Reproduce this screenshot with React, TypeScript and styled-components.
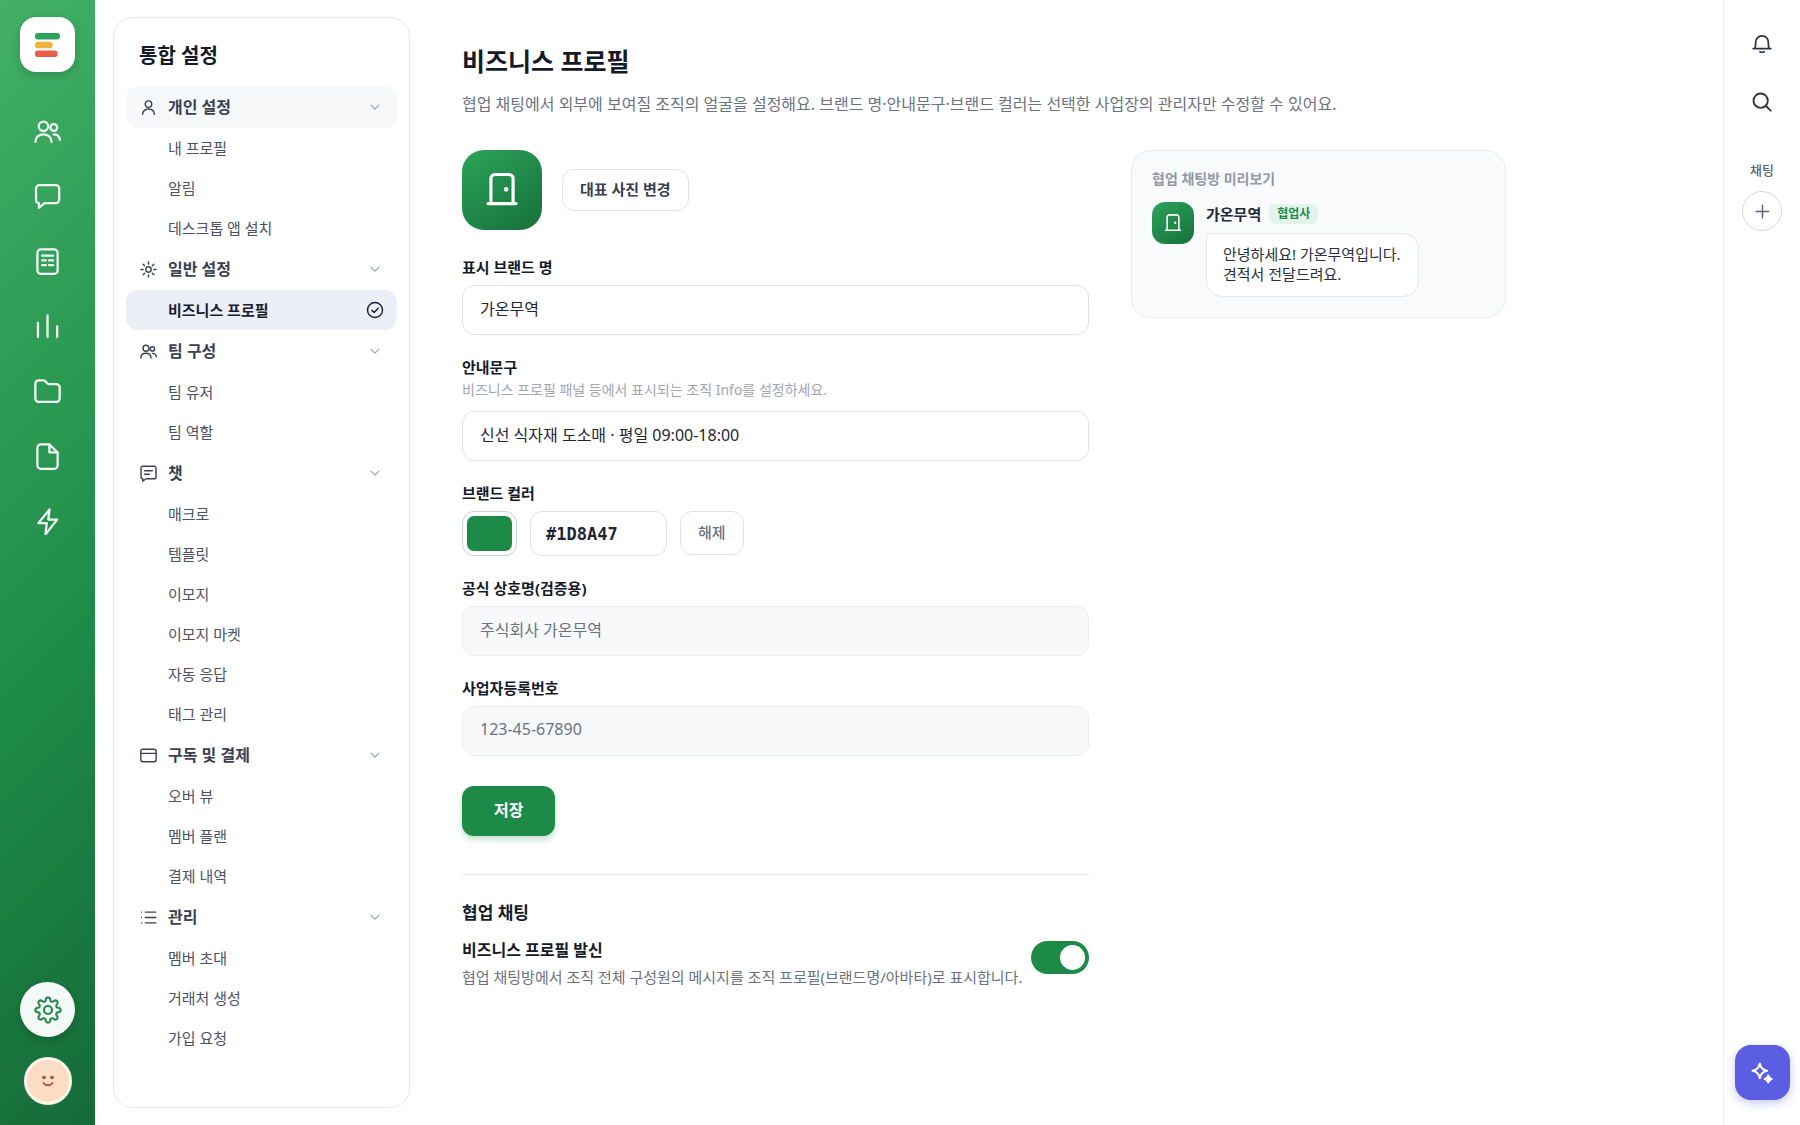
import React, { useState } from "react";
import styled, { createGlobalStyle, css } from "styled-components";

const sans = '"Noto Sans", "Noto Sans CJK KR", sans-serif';

const GlobalStyle = createGlobalStyle`
  *, *::before, *::after { box-sizing: border-box; }
  body { margin: 0; background: #fff; color: #151a28; font-family: ${sans}; font-size: 15px; }
  button, input { font-family: inherit; margin: 0; }
  button { cursor: pointer; }
  h1, h2, p, ul { margin: 0; padding: 0; }
  ul { list-style: none; }
`;

/* ---------- icons ---------- */

const Svg = styled.svg<{ $size: number; $stroke?: number }>`
  width: ${p => p.$size}px;
  height: ${p => p.$size}px;
  flex: none;
  display: block;
  fill: none;
  stroke: currentColor;
  stroke-width: ${p => p.$stroke ?? 2};
  stroke-linecap: round;
  stroke-linejoin: round;
`;

type IconProps = { size: number; stroke?: number };
const icon = (body: React.ReactNode) => ({ size, stroke }: IconProps) => (
  <Svg $size={size} $stroke={stroke} viewBox="0 0 24 24" aria-hidden="true">{body}</Svg>
);

const UsersIcon = icon(<>
  <circle cx="8.4" cy="7.4" r="4.2" />
  <path d="M1.2 21.3c.2-4.2 3.3-6.8 7.2-6.8s7 2.6 7.2 6.8" />
  <circle cx="17.6" cy="8.4" r="3" />
  <path d="M17.4 14.6c3 0 5.2 1.8 5.7 4.8" />
</>);
const ChatIcon = icon(<path d="M4.8 1.8h14.6a3 3 0 0 1 3 3v10.1a3 3 0 0 1-3 3H9.4L4.4 22v-4.1a2.7 2.7 0 0 1-2.6-2.7V4.8a3 3 0 0 1 3-3Z" />);
const ReceiptIcon = icon(<>
  <rect x="3" y="1.3" width="18" height="21.6" rx="3" />
  <path d="M7.2 6.8h9.8M7.2 11.1h3.4M13.4 11.1H17M7.2 15.3h3.4M13.4 15.3H17" />
</>);
const BarsIcon = icon(<path d="M3.5 8.8v12.6M12 2.2v19.2M20.6 11.8v9.6" />);
const FolderIcon = icon(<path d="M4.2 2.1h4c.9 0 1.6.3 2.2 1l1.1 1.4c.5.6 1.1.9 1.9.9h6.4a3 3 0 0 1 3 3v9.8a3 3 0 0 1-3 3H4.2a3 3 0 0 1-3-3V5.1a3 3 0 0 1 3-3Z" />);
const FileIcon = icon(<>
  <path d="M6 1.3h7.7L21 8.4v11.5a3 3 0 0 1-3 3H6a3 3 0 0 1-3-3V4.3a3 3 0 0 1 3-3Z" />
  <path d="M13.7 1.5v6.9h7.1" />
</>);
const BoltIcon = icon(<path d="M13.8 1.3 4 13.4h7.3l-1.1 10L20.6 10.3h-7.9l1.1-9Z" />);
const PersonIcon = icon(<>
  <circle cx="12" cy="7.2" r="4.6" />
  <path d="M3.6 21.6c.5-5 3.9-7.6 8.4-7.6s7.9 2.6 8.4 7.6" />
</>);
const SunIcon = icon(<>
  <circle cx="12" cy="12" r="3.8" />
  <path d="M12 1.4v3M12 19.6v3M1.4 12h3M19.6 12h3M4.5 4.5l2.1 2.1M17.4 17.4l2.1 2.1M4.5 19.5l2.1-2.1M17.4 6.6l2.1-2.1" />
</>);
const MessageIcon = icon(<>
  <path d="M4 1.8h16a2.6 2.6 0 0 1 2.6 2.6v12.4a2.6 2.6 0 0 1-2.6 2.6H8.6l-4.8 3.4v-3.5a2.4 2.4 0 0 1-2.4-2.4V4.4A2.6 2.6 0 0 1 4 1.8Z" />
  <path d="M6.6 8.2h10.8M6.6 13h6.6" />
</>);
const CardIcon = icon(<>
  <rect x="1.2" y="3.2" width="21.6" height="17.6" rx="3" />
  <path d="M1.2 9h21.6" />
</>);
const ListIcon = icon(<path d="M7.6 4.4h14.8M7.6 12h14.8M7.6 19.6h14.8M2.2 4.4h.1M2.2 12h.1M2.2 19.6h.1" />);
const ChevronIcon = icon(<path d="m2.500 7.500 9.500 9.500 9.500-9.500" />);
const CheckCircleIcon = icon(<>
  <circle cx="12" cy="12" r="10" />
  <path d="m7.8 12.200 3 3 5.400-5.600" />
</>);
const DoorIcon = icon(<>
  <path d="M5 20.4V4.8a2.6 2.6 0 0 1 2.6-2.6h8.8A2.6 2.6 0 0 1 19 4.8v15.6" />
  <path d="M3.2 20.6h17.6" />
  <circle cx="14.6" cy="11.6" r=".5" fill="currentColor" />
</>);
const BellIcon = icon(<>
  <path d="M1.4 18.6h21.2M3.6 18.4c.8-2 .8-4.8.8-7.4a7.6 7.6 0 0 1 15.2 0c0 2.600 0 5.400.8 7.400" />
  <path d="M9.6 22.4c1.3 1.3 3.5 1.3 4.8 0" />
</>);
const SearchIcon = icon(<>
  <circle cx="10.4" cy="10.4" r="8.6" />
  <path d="m16.800 16.800 5.600 5.600" />
</>);
const PlusIcon = icon(<path d="M12 2v20M2 12h20" />);
const SparkleIcon = icon(<>
  <path d="M9.6 1.6c.9 5 3 7.1 8 8-5 .9-7.1 3-8 8-.9-5-3-7.1-8-8 5-.9 7.1-3 8-8Z" />
  <path d="M18.8 14.6c.5 2.6 1.3 3.4 3.9 3.9-2.600.5-3.400 1.300-3.900 3.900-.5-2.600-1.300-3.400-3.900-3.900 2.600-.5 3.400-1.300 3.900-3.900Z" fill="currentColor" />
</>);

const gearOutline = Array.from({ length: 240 }, (_, i) => {
  const t = (i / 240) * Math.PI * 2;
  const r = 9.3 + 1.6 * Math.tanh(1.6 * Math.cos(8 * t));
  return `${i ? "L" : "M"}${(12 + r * Math.sin(t)).toFixed(2)} ${(12 - r * Math.cos(t)).toFixed(2)}`;
}).join("") + "Z";
const GearIcon = icon(<><path d={gearOutline} /><circle cx="12" cy="12" r="3.4" /></>);

/* ---------- shell ---------- */

const Shell = styled.div`
  display: grid;
  grid-template-columns: 95px auto minmax(0, 1fr) 77px;
  min-height: 100vh;
`;

const Rail = styled.nav`
  display: flex;
  flex-direction: column;
  align-items: center;
  padding: 17px 0 20px;
  background: linear-gradient(135deg, #43b066 0%, #1d8a47 60%, #166b38 100%);
  color: #f2fff6;
`;

const Logo = styled.a`
  display: grid;
  place-items: center;
  width: 55px;
  height: 55px;
  border-radius: 16px;
  background: #fff;
  box-shadow: 0 3px 8px rgba(0, 40, 15, 0.22);
`;

const RailList = styled.ul`
  display: flex;
  flex-direction: column;
  gap: 15px;
  margin-top: 34px;
`;

const RailButton = styled.button`
  display: grid;
  place-items: center;
  width: 50px;
  height: 50px;
  padding: 0;
  border: 0;
  border-radius: 14px;
  background: none;
  color: inherit;
`;

const RailFoot = styled.div`
  display: flex;
  flex-direction: column;
  align-items: center;
  gap: 20px;
  margin-top: auto;
`;

const RoundButton = styled.button`
  display: grid;
  place-items: center;
  width: 55px;
  height: 55px;
  padding: 0;
  border: 0;
  border-radius: 50%;
  background: #f4f8f6;
  color: #1d8a47;
  box-shadow: 0 3px 8px rgba(0, 40, 15, 0.25);
`;

const UserButton = styled.button`
  display: grid;
  place-items: center;
  width: 48px;
  height: 48px;
  padding: 0;
  border: 3px solid #fff6ea;
  border-radius: 50%;
  background: #fddcc4;
  color: #a8502b;
`;

/* ---------- settings menu ---------- */

const Menu = styled.aside`
  width: 297px;
  margin: 17px 0 17px 18px;
  padding: 22px 12px;
  border: 1px solid #e7e9ec;
  border-radius: 20px;
`;

const MenuTitle = styled.h2`
  padding: 0 13px 14px;
  font-size: 20px;
  line-height: 32px;
  font-weight: 700;
`;

const GroupButton = styled.button<{ $hover?: boolean }>`
  display: flex;
  align-items: center;
  gap: 11px;
  width: 100%;
  height: 42px;
  padding: 0 17px 0 14px;
  border: 0;
  border-radius: 12px;
  background: ${p => (p.$hover ? "#f6f8fa" : "none")};
  color: #3a4152;
  font-size: 16px;
  line-height: 22px;
  font-weight: 700;
  text-align: left;
`;

const GroupName = styled.span`
  flex: 1;
`;

const Chevron = styled.span`
  color: #9aa0ac;
`;

const ItemLink = styled.a<{ $active?: boolean }>`
  display: flex;
  align-items: center;
  justify-content: space-between;
  height: 40px;
  padding: 0 13px 0 42px;
  border-radius: 12px;
  color: #4b5262;
  font-size: 15px;
  line-height: 22px;
  text-decoration: none;
  ${p => p.$active && css`
    background: #eceff7;
    color: #1a2030;
    font-weight: 700;
  `}
`;

/* ---------- main ---------- */

const Main = styled.main`
  padding: 43px 40px 40px 52px;
`;

const Title = styled.h1`
  font-size: 25px;
  line-height: 36px;
  font-weight: 700;
`;

const Lead = styled.p`
  margin-top: 13px;
  color: #6b7280;
  font-size: 16px;
  line-height: 24px;
`;

const Columns = styled.div`
  display: grid;
  grid-template-columns: minmax(0, 627px) minmax(0, 375px);
  align-items: start;
  gap: 42px;
  margin-top: 34px;
`;

const Form = styled.form`
  display: flex;
  flex-direction: column;
`;

const PhotoRow = styled.div`
  display: flex;
  align-items: center;
  gap: 20px;
  margin-bottom: 5px;
`;

const BrandAvatar = styled.div<{ $size: number; $radius: number }>`
  display: grid;
  place-items: center;
  flex: none;
  width: ${p => p.$size}px;
  height: ${p => p.$size}px;
  border-radius: ${p => p.$radius}px;
  background: linear-gradient(145deg, #2ca35a, #16703a);
  color: #fff;
`;

const OutlineButton = styled.button<{ $quiet?: boolean }>`
  height: ${p => (p.$quiet ? 44 : 42)}px;
  padding: 0 17px 2px;
  border: 1px solid #e1e4e8;
  border-radius: 12px;
  background: #fff;
  color: ${p => (p.$quiet ? "#6b7280" : "#374051")};
  font-size: 15px;
  line-height: 22px;
  font-weight: ${p => (p.$quiet ? 500 : 600)};
`;

const Field = styled.div`
  display: flex;
  flex-direction: column;
  margin-top: 21px;
`;

const Label = styled.label`
  font-size: 15px;
  line-height: 22px;
  font-weight: 700;
`;

const Hint = styled.p`
  padding-bottom: 2px;
  color: #a0a6b1;
  font-size: 14px;
  line-height: 24px;
`;

const TextInput = styled.input`
  width: 100%;
  height: 50px;
  margin-top: 7px;
  padding: 0 17px 4px;
  border: 1px solid #dfe2e6;
  border-radius: 12px;
  background: #fff;
  color: #1f2533;
  font-size: 16px;
  &:read-only {
    border-color: #eceef1;
    background: #f7f9fb;
    color: #6b7280;
  }
`;

const ColorRow = styled.div`
  display: flex;
  gap: 13px;
  margin-top: 7px;
`;

const ColorInput = styled.input`
  width: 55px;
  height: 45px;
  padding: 4px;
  border: 1px solid #c6d3d2;
  border-radius: 12px;
  background: #fff;
  appearance: none;
  &::-webkit-color-swatch-wrapper { padding: 0; }
  &::-webkit-color-swatch { border: 0; border-radius: 7px; }
`;

const HexInput = styled.input`
  width: 137px;
  height: 45px;
  padding: 0 15px;
  border: 1px solid #dfe2e6;
  border-radius: 12px;
  background: #fff;
  color: #1f2533;
  && { font-family: "DejaVu Sans Mono", monospace; }
  font-size: 17px;
  font-weight: 700;
`;

const SaveButton = styled.button`
  align-self: flex-start;
  height: 50px;
  margin-top: 30px;
  padding: 0 32px 2px;
  border: 0;
  border-radius: 12px;
  background: #1d8a47;
  color: #fff;
  font-size: 16px;
  line-height: 24px;
  font-weight: 700;
  box-shadow: 0 3px 6px rgba(29, 138, 71, 0.3);
`;

const Section = styled.section`
  margin-top: 38px;
  padding-top: 24px;
  border-top: 1px solid #e7e9ec;
`;

const SectionTitle = styled.h2`
  font-size: 17px;
  line-height: 28px;
  font-weight: 700;
`;

const ToggleRow = styled.div`
  display: flex;
  align-items: flex-start;
  justify-content: space-between;
  gap: 4px;
  margin-top: 10px;
`;

const ToggleLabel = styled.label`
  display: block;
  font-size: 16px;
  line-height: 26px;
  font-weight: 700;
`;

const ToggleText = styled.p`
  margin-top: 3px;
  color: #6b7280;
  font-size: 15px;
  line-height: 22px;
`;

const Switch = styled.input`
  flex: none;
  width: 58px;
  height: 33px;
  padding: 4px;
  border-radius: 17px;
  background: #cfd4da;
  appearance: none;
  cursor: pointer;
  && { margin-top: 4px; }
  &::before {
    content: "";
    display: block;
    width: 25px;
    height: 25px;
    border-radius: 50%;
    background: #fff;
  }
  &:checked { background: #1d8a47; }
  &:checked::before { margin-left: auto; }
`;

/* ---------- chat preview ---------- */

const Preview = styled.aside`
  padding: 17px 20px 20px;
  border: 1px solid #e8eaee;
  border-radius: 20px;
  background: #f9fafc;
`;

const PreviewTitle = styled.h2`
  color: #9298a5;
  font-size: 14px;
  line-height: 22px;
  font-weight: 600;
`;

const Message = styled.div`
  display: flex;
  align-items: flex-start;
  gap: 12px;
  margin-top: 12px;
`;

const Sender = styled.div`
  display: flex;
  align-items: center;
  gap: 8px;
  font-size: 15px;
  line-height: 24px;
  font-weight: 700;
  color: #232936;
`;

const Tag = styled.span`
  padding: 0 8px;
  border-radius: 6px;
  background: #e5f4ea;
  color: #1d8a47;
  font-size: 12px;
  line-height: 20px;
`;

const Bubble = styled.p`
  width: fit-content;
  margin-top: 7px;
  padding: 10px 17px 12px 16px;
  border: 1px solid #e4e7eb;
  border-radius: 4px 16px 16px 16px;
  background: #fff;
  color: #2a303d;
  font-size: 15px;
  line-height: 20px;
`;

/* ---------- right dock ---------- */

const Dock = styled.aside`
  display: flex;
  flex-direction: column;
  align-items: center;
  padding: 23px 0 25px;
  border-left: 1px solid #eceef1;
  color: #2d3340;
`;

const DockButton = styled.button`
  display: grid;
  place-items: center;
  width: 40px;
  height: 40px;
  margin-bottom: 19px;
  padding: 0;
  border: 0;
  background: none;
  color: inherit;
`;

const DockLabel = styled.span`
  margin-top: 20px;
  color: #5b6374;
  font-size: 13px;
  line-height: 18px;
  font-weight: 500;
`;

const AddButton = styled.button`
  display: grid;
  place-items: center;
  width: 40px;
  height: 40px;
  margin-top: 12px;
  padding: 0;
  border: 1px solid #d5d8dd;
  border-radius: 50%;
  background: #fff;
  color: #5b6374;
`;

const AssistantButton = styled.button`
  display: grid;
  place-items: center;
  width: 55px;
  height: 55px;
  margin-top: auto;
  padding: 0;
  border: 0;
  border-radius: 16px;
  background: #5b5ee1;
  color: #fff;
  box-shadow: 0 3px 10px rgba(91, 94, 225, 0.35);
`;

/* ---------- data ---------- */

const railItems = [
  { name: "멤버", Icon: UsersIcon },
  { name: "채팅", Icon: ChatIcon },
  { name: "주문서", Icon: ReceiptIcon },
  { name: "통계", Icon: BarsIcon },
  { name: "폴더", Icon: FolderIcon },
  { name: "문서", Icon: FileIcon },
  { name: "자동화", Icon: BoltIcon },
];

const groups = [
  { name: "개인 설정", Icon: PersonIcon, items: ["내 프로필", "알림", "데스크톱 앱 설치"] },
  { name: "일반 설정", Icon: SunIcon, items: ["비즈니스 프로필"] },
  { name: "팀 구성", Icon: UsersIcon, items: ["팀 유저", "팀 역할"] },
  { name: "챗", Icon: MessageIcon, items: ["매크로", "템플릿", "이모지", "이모지 마켓", "자동 응답", "태그 관리"] },
  { name: "구독 및 결제", Icon: CardIcon, items: ["오버 뷰", "멤버 플랜", "결제 내역"] },
  { name: "관리", Icon: ListIcon, items: ["멤버 초대", "거래처 생성", "가입 요청"] },
];

const activeItem = "비즈니스 프로필";

export default function App() {
  const [brand, setBrand] = useState("가온무역");
  const [intro, setIntro] = useState("신선 식자재 도소매 · 평일 09:00-18:00");
  const [color, setColor] = useState("#1D8A47");
  const [shared, setShared] = useState(true);

  return (
    <>
      <GlobalStyle />
      <Shell>
        <Rail aria-label="주 메뉴">
          <Logo href="#" aria-label="홈">
            <svg width="25" height="24" viewBox="0 0 25 24" aria-hidden="true">
              <rect x="0" y="0" width="25" height="6.400" rx="2.800" fill="#2ba35a" />
              <rect x="0" y="8.800" width="17.500" height="6.400" rx="2.800" fill="#f2b33d" />
              <rect x="0" y="17.600" width="22.500" height="6.400" rx="2.800" fill="#e85d4c" />
            </svg>
          </Logo>
          <RailList>
            {railItems.map(({ name, Icon }) => (
              <li key={name}><RailButton type="button" aria-label={name}><Icon size={27} /></RailButton></li>
            ))}
          </RailList>
          <RailFoot>
            <RoundButton type="button" aria-label="설정"><GearIcon size={28} stroke={1.8} /></RoundButton>
            <UserButton type="button" aria-label="내 계정">
              <svg width="14" height="12" viewBox="0 0 14 12" aria-hidden="true">
                <circle cx="3" cy="2.5" r="1.8" fill="currentColor" />
                <circle cx="11" cy="2.5" r="1.8" fill="currentColor" />
                <path d="M2.5 8c2 3 7 3 9 0" fill="none" stroke="currentColor" strokeWidth="1.8" strokeLinecap="round" />
              </svg>
            </UserButton>
          </RailFoot>
        </Rail>

        <Menu>
          <MenuTitle>통합 설정</MenuTitle>
          {groups.map(({ name, Icon, items }, i) => (
            <div key={name}>
              <GroupButton type="button" aria-expanded="true" $hover={i === 0}>
                <Icon size={17} stroke={2} />
                <GroupName>{name}</GroupName>
                <Chevron><ChevronIcon size={10} stroke={2.8} /></Chevron>
              </GroupButton>
              <ul>
                {items.map(item => (
                  <li key={item}>
                    <ItemLink href="#" $active={item === activeItem} aria-current={item === activeItem ? "page" : undefined}>
                      {item}
                      {item === activeItem && <CheckCircleIcon size={18} stroke={1.9} />}
                    </ItemLink>
                  </li>
                ))}
              </ul>
            </div>
          ))}
        </Menu>

        <Main>
          <Title>비즈니스 프로필</Title>
          <Lead>협업 채팅에서 외부에 보여질 조직의 얼굴을 설정해요. 브랜드 명·안내문구·브랜드 컬러는 선택한 사업장의 관리자만 수정할 수 있어요.</Lead>
          <Columns>
            <Form onSubmit={e => e.preventDefault()}>
              <PhotoRow>
                <BrandAvatar $size={80} $radius={22}><DoorIcon size={38} stroke={2} /></BrandAvatar>
                <OutlineButton type="button">대표 사진 변경</OutlineButton>
              </PhotoRow>
              <Field>
                <Label htmlFor="brand">표시 브랜드 명</Label>
                <TextInput id="brand" value={brand} onChange={e => setBrand(e.target.value)} />
              </Field>
              <Field>
                <Label htmlFor="intro">안내문구</Label>
                <Hint id="intro-hint">비즈니스 프로필 패널 등에서 표시되는 조직 Info를 설정하세요.</Hint>
                <TextInput id="intro" aria-describedby="intro-hint" value={intro} onChange={e => setIntro(e.target.value)} />
              </Field>
              <Field>
                <Label htmlFor="color">브랜드 컬러</Label>
                <ColorRow>
                  <ColorInput id="color" type="color" value={color.toLowerCase()} onChange={e => setColor(e.target.value.toUpperCase())} />
                  <HexInput aria-label="브랜드 컬러 코드" value={color} onChange={e => setColor(e.target.value)} />
                  <OutlineButton type="button" $quiet>해제</OutlineButton>
                </ColorRow>
              </Field>
              <Field>
                <Label htmlFor="company">공식 상호명(검증용)</Label>
                <TextInput id="company" value="주식회사 가온무역" readOnly />
              </Field>
              <Field>
                <Label htmlFor="regno">사업자등록번호</Label>
                <TextInput id="regno" value="123-45-67890" readOnly />
              </Field>
              <SaveButton type="submit">저장</SaveButton>
              <Section>
                <SectionTitle>협업 채팅</SectionTitle>
                <ToggleRow>
                  <div>
                    <ToggleLabel htmlFor="shared">비즈니스 프로필 발신</ToggleLabel>
                    <ToggleText>협업 채팅방에서 조직 전체 구성원의 메시지를 조직 프로필(브랜드명/아바타)로 표시합니다.</ToggleText>
                  </div>
                  <Switch id="shared" type="checkbox" role="switch" checked={shared} onChange={e => setShared(e.target.checked)} />
                </ToggleRow>
              </Section>
            </Form>

            <Preview>
              <PreviewTitle>협업 채팅방 미리보기</PreviewTitle>
              <Message>
                <BrandAvatar $size={42} $radius={13}><DoorIcon size={20} stroke={1.9} /></BrandAvatar>
                <div>
                  <Sender>{brand}<Tag>협업사</Tag></Sender>
                  <Bubble>안녕하세요! 가온무역입니다.<br />견적서 전달드려요.</Bubble>
                </div>
              </Message>
            </Preview>
          </Columns>
        </Main>

        <Dock>
          <DockButton type="button" aria-label="알림"><BellIcon size={20} stroke={2.1} /></DockButton>
          <DockButton type="button" aria-label="검색"><SearchIcon size={20} stroke={2.2} /></DockButton>
          <DockLabel>채팅</DockLabel>
          <AddButton type="button" aria-label="채팅 추가"><PlusIcon size={15} stroke={2.3} /></AddButton>
          <AssistantButton type="button" aria-label="AI 도우미"><SparkleIcon size={22} stroke={2.2} /></AssistantButton>
        </Dock>
      </Shell>
    </>
  );
}
